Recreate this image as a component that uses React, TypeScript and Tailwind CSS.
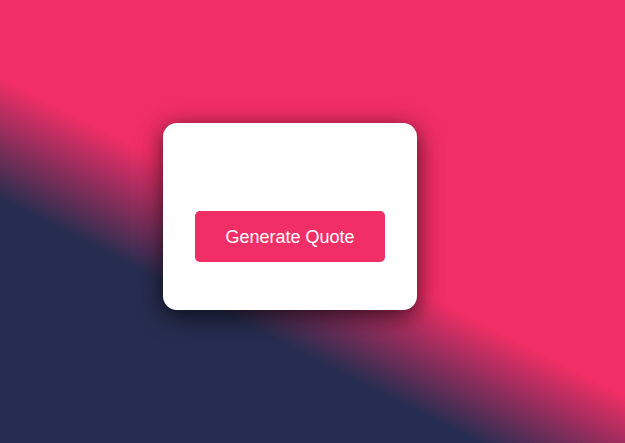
const App = () => {
  return (
    <div className="h-[443px] w-full overflow-hidden bg-[linear-gradient(207deg,#f12e66_52%,#262d50_68%)] font-['Liberation_Sans',Arial,sans-serif]">
      <div className="pl-[163px] pt-[123px]">
        {/* Quote card */}
        <div className="w-[254px] h-[187px] bg-white rounded-[14px] shadow-[0_6px_24px_rgba(0,0,0,0.7)] px-8 pt-[88px]">
          <button className="w-full h-[51px] rounded-[5px] bg-[#f12e66] text-white text-[18px] leading-none">
            Generate Quote
          </button>
        </div>
      </div>
    </div>
  );
};

export default App;
